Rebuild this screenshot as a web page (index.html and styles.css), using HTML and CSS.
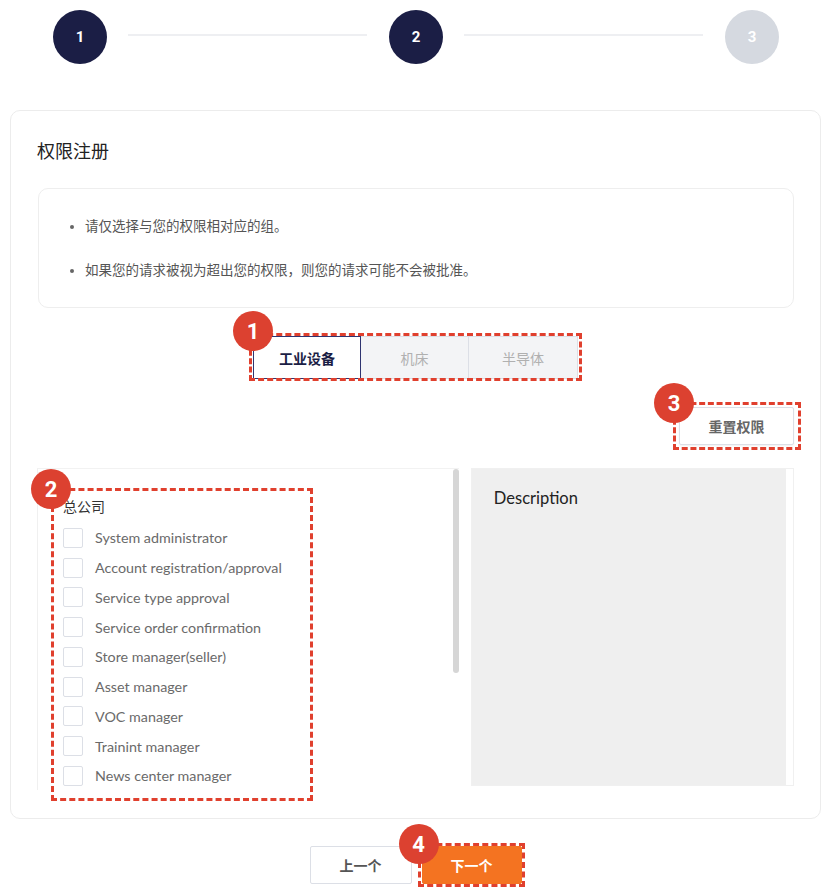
FILE: index.html
```html
<!DOCTYPE html>
<html lang="zh">
<head>
<meta charset="utf-8">
<link rel="stylesheet" href="styles.css">
</head>
<body>
<div class="steps">
  <div class="step done">1</div>
  <div class="step-line"></div>
  <div class="step done">2</div>
  <div class="step-line"></div>
  <div class="step todo">3</div>
</div>

<div class="card">
  <h2 class="card-title">权限注册</h2>
  <div class="notice">
    <ul>
      <li>请仅选择与您的权限相对应的组。</li>
      <li>如果您的请求被视为超出您的权限，则您的请求可能不会被批准。</li>
    </ul>
  </div>

  <div class="tabs-row">
    <div class="tabs annotated">
      <button class="tab active">工业设备</button>
      <button class="tab">机床</button>
      <button class="tab">半导体</button>
      <span class="dash dash-tabs"></span>
      <span class="badge badge-tabs">1</span>
    </div>
  </div>

  <div class="reset-row">
    <div class="annotated">
      <button class="reset-btn">重置权限</button>
      <span class="dash dash-reset"></span>
      <span class="badge badge-reset">3</span>
    </div>
  </div>

  <div class="panels">
    <div class="list-panel">
      <div class="list-content">
        <div class="group-title">总公司</div>
        <label class="row"><span class="cb"></span><span>System administrator</span></label>
        <label class="row"><span class="cb"></span><span>Account registration/approval</span></label>
        <label class="row"><span class="cb"></span><span>Service type approval</span></label>
        <label class="row"><span class="cb"></span><span>Service order confirmation</span></label>
        <label class="row"><span class="cb"></span><span>Store manager(seller)</span></label>
        <label class="row"><span class="cb"></span><span>Asset manager</span></label>
        <label class="row"><span class="cb"></span><span>VOC manager</span></label>
        <label class="row"><span class="cb"></span><span>Trainint manager</span></label>
        <label class="row"><span class="cb"></span><span>News center manager</span></label>
      </div>
      <div class="scroll-track"><div class="scroll-thumb"></div></div>
      <span class="dash dash-list"></span>
      <span class="badge badge-list">2</span>
    </div>
    <div class="desc-panel">
      <div class="desc-body">Description</div>
    </div>
  </div>
</div>

<div class="actions">
  <button class="btn prev">上一个</button>
  <div class="annotated">
    <button class="btn next">下一个</button>
    <span class="dash dash-next"></span>
    <span class="badge badge-next">4</span>
  </div>
</div>
</body>
</html>
```

FILE: styles.css
```css
* { box-sizing: border-box; }
html, body { margin: 0; padding: 0; background: #fff; }
body {
  width: 826px;
  height: 894px;
  overflow: hidden;
  font-family: "Noto Sans CJK SC", "Lato", sans-serif;
  color: #333;
}

.steps {
  display: flex;
  align-items: center;
  padding: 10px 47px 0 53px;
}
.step {
  width: 54px;
  height: 54px;
  border-radius: 50%;
  display: flex;
  align-items: center;
  justify-content: center;
  font-family: "Roboto", sans-serif;
  font-weight: 700;
  font-size: 15px;
  color: #fff;
  flex: none;
}
.step.done { background: #1b1e45; }
.step.todo { background: #d5d9e0; }
.step-line {
  flex: 1;
  height: 2px;
  background: #eeeff2;
  margin: -4px 22px 0 21px;
}

.card {
  margin: 46px 5px 0 10px;
  border: 1px solid #ececec;
  border-radius: 10px;
  padding: 26px 26px 27px 26px;
  height: 709px;
}
.card-title {
  margin: 0;
  font-size: 18px;
  font-weight: 400;
  color: #222;
  line-height: 26px;
  height: 26px;
}
.notice {
  margin: 25px 0 0 1px;
  border: 1px solid #eeeeee;
  border-radius: 10px;
  height: 120px;
  padding: 26px 0 0 0;
}
.notice ul {
  margin: 0;
  padding: 0 0 0 46px;
}
.notice li {
  font-size: 13.5px;
  color: #555;
  line-height: 20px;
  margin-bottom: 24px;
  padding-left: 0;
}
.notice li::marker { color: #666; font-size: 11px; }

.annotated { position: relative; }
.dash {
  position: absolute;
  border: 3px dashed #e0402e;
  pointer-events: none;
}
.badge {
  position: absolute;
  width: 40px;
  height: 40px;
  border-radius: 50%;
  background: #dc4130;
  color: #fff;
  font-family: "Roboto", sans-serif;
  font-weight: 700;
  font-size: 22px;
  display: flex;
  align-items: center;
  justify-content: center;
}

.tabs-row {
  display: flex;
  justify-content: center;
  margin-top: 28px;
}
.tabs { display: flex; }
.tab {
  height: 43px;
  width: 108px;
  border: 1px solid #dcdfe6;
  background: #f3f4f6;
  color: #b0b0b0;
  font-family: "Noto Sans CJK SC", sans-serif;
  font-size: 14px;
  padding: 0;
  margin: 0;
}
.tab + .tab { border-left: none; }
.tab:last-of-type { width: 109px; }
.tab.active {
  background: #fff;
  border: 1px solid #2e3470;
  color: #1b1e45;
  font-weight: 700;
}
.dash-tabs { left: -4px; top: -3px; right: -4px; bottom: -2px; }
.badge-tabs { left: -20px; top: -25px; }

.reset-row {
  display: flex;
  justify-content: flex-end;
  margin-top: 28px;
}
.reset-btn {
  width: 115px;
  height: 38px;
  background: #fff;
  border: 1px solid #dcdfe6;
  border-radius: 2px;
  color: #666;
  font-family: "Noto Sans CJK SC", sans-serif;
  font-size: 14px;
  font-weight: 700;
  padding: 0;
  box-shadow: 0 1px 2px rgba(0,0,0,0.06);
}
.dash-reset { left: -6px; top: -5px; right: -7px; bottom: -5px; }
.badge-reset { left: -25px; top: -24px; }

.panels {
  display: flex;
  gap: 12px;
  margin-top: 23px;
  height: 322px;
}
.list-panel {
  position: relative;
  width: 423px;
  display: flex;
  border-top: 1px solid #f2f2f2;
  border-left: 1px solid #f0f0f0;
}
.list-content {
  flex: 1;
  padding: 27px 0 0 25px;
  overflow: hidden;
}
.group-title {
  font-size: 14px;
  line-height: 20px;
  color: #333;
  margin-bottom: 7px;
}
.row {
  display: flex;
  align-items: center;
  height: 29.75px;
  gap: 12px;
  font-family: "Lato", "Noto Sans", sans-serif;
  font-size: 14.3px;
  color: #6a6a6a;
}
.cb {
  width: 20px;
  height: 20px;
  border: 1px solid #dcdfe6;
  border-radius: 2px;
  background: #fff;
  flex: none;
}
.scroll-track {
  width: 6px;
  flex: none;
}
.scroll-thumb {
  height: 204px;
  background: #d6d6d6;
  border-radius: 3px;
}
.dash-list { left: 13px; top: 19px; width: 262px; height: 313px; }
.badge-list { left: -7px; top: 0px; }

.desc-panel {
  width: 324px;
  height: 318px;
  border: 1px solid #f0f0f0;
  background: #fff;
  padding-right: 7px;
}
.desc-body {
  height: 100%;
  background: #efefef;
  padding: 19px 0 0 22px;
  font-family: "Lato", "Noto Sans", sans-serif;
  font-size: 16.5px;
  color: #222;
}

.actions {
  display: flex;
  justify-content: center;
  gap: 10px;
  margin-top: 27px;
  padding-left: 5px;
}
.btn {
  height: 38px;
  font-family: "Noto Sans CJK SC", sans-serif;
  font-size: 14px;
  font-weight: 700;
  padding: 0;
  border-radius: 2px;
}
.btn.prev {
  width: 102px;
  background: #fff;
  border: 1px solid #dcdfe6;
  color: #555;
}
.btn.next {
  width: 100px;
  background: #f47321;
  border: 1px solid #f47321;
  color: #fff;
}
.dash-next { left: -4px; top: -3px; right: -3px; bottom: -3px; }
.badge-next { left: -23px; top: -22px; }
```
